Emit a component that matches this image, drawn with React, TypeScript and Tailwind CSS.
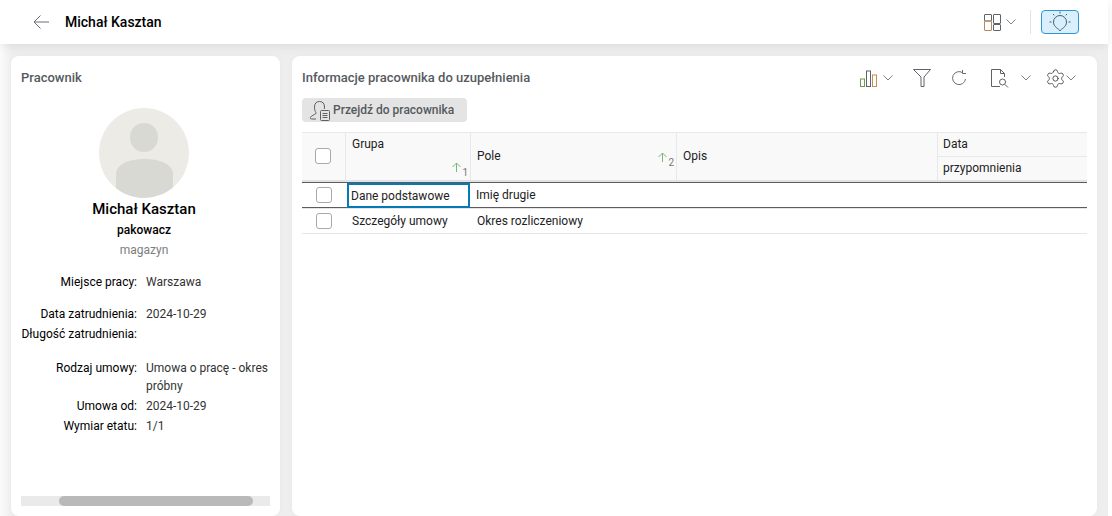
import React from "react";
import { Settings } from "lucide-react";

const Chevron = () => (
  <svg width="10" height="6" viewBox="0 0 10 6" fill="none" stroke="#6f7480" strokeWidth="0.9">
    <path d="M0.5 0.5L5 5l4.500-4.500" />
  </svg>
);

const SortArrow = ({ n }: { n: number }) => (
  <span className="flex items-start">
    <svg width="9" height="10" viewBox="0 0 9 10" fill="none" stroke="#78b878" strokeWidth="1">
      <path d="M4.500 10V1M0.500 5l4-4 4 4" />
    </svg>
    <span className="text-[10px] leading-[10px] mt-[6px] ml-[1px] text-[#777]">{n}</span>
  </span>
);

const Check = () => <div className="h-4 w-4 rounded-[3px] border border-[#a9a9a9] bg-white" />;

const Info = ({ label, value, className }: { label: string; value?: string; className?: string }) => (
  <div className={`flex ${className || ""}`}>
    <div className="w-[116px] shrink-0 whitespace-nowrap text-right font-[450] text-black">{label}</div>
    <div className="ml-[9px] w-[124px] text-[#333]">{value}</div>
  </div>
);

export default function App() {
  return (
    <div className="h-[516px] w-[1112px] overflow-hidden bg-white text-[12px] leading-[18px]" style={{ fontFamily: "Roboto, sans-serif" }}>
      <div className="h-full w-[1108px] bg-[linear-gradient(to_right,#fbfbfb,#eeeeee_12px)] flex flex-col">
        {/* Header */}
        <header className="h-[44px] shrink-0 bg-white shadow-[0_2px_10px_rgba(0,0,0,0.08)] flex items-center pl-[33px] pr-[29px] z-10">
          <svg width="16" height="14" viewBox="0 0 16 14" fill="none" stroke="#6b6f76" strokeWidth="1">
            <path d="M16 7H1M7.500 0.500L1 7l6.500 6.500" />
          </svg>
          <h1 className="ml-[16px] text-[14px] font-medium text-black">Michał Kasztan</h1>
          <div className="ml-auto flex items-center">
            <svg width="17" height="17" viewBox="0 0 17 17" fill="none" stroke="#5f6368" strokeWidth="1">
              <rect x="0.500" y="0.500" width="7" height="6.500" rx="0.500" />
              <rect x="0.500" y="7" width="7" height="9.500" rx="0.500" stroke="#b9875c" />
              <rect x="9.500" y="0.500" width="7" height="9" rx="0.500" />
              <rect x="9.500" y="10.500" width="7" height="6" rx="0.500" />
            </svg>
            <span className="ml-[5px]"><Chevron /></span>
            <div className="ml-[14px] h-[24px] w-px bg-[#e3e3e3]" />
            <button className="ml-[10px] flex h-[24px] w-[38px] items-center justify-center rounded-[4px] border border-[#2b95d6] bg-[#d9f0fc]">
              <svg width="24" height="22" viewBox="0 0 24 22" fill="none" stroke="#3f5f75" strokeWidth="1">
                <path d="M12 20c-1-2.500-6.500-3.500-6.500-9a6.500 6.500 0 0 1 13 0c0 5.500-5.500 6.500-6.500 9z" />
                <path d="M12 0.500v2M5 3l1.300 1.300M19 3l-1.300 1.300M1.500 11h2M20.500 11h2" />
              </svg>
            </button>
          </div>
        </header>

        <main className="flex-1 flex gap-3 pl-[11px] pr-[11px] pt-3 min-h-0">
          {/* Left panel */}
          <section className="w-[269px] shrink-0 rounded-[8px] bg-white flex flex-col px-[10px] pt-[13px] pb-[10px] shadow-[0_0_6px_rgba(0,0,0,0.03)]">
            <h2 className="font-medium text-[#555a60] text-[13px] leading-[17px]">Pracownik</h2>
            <div className="mt-[22px] flex justify-center pr-[3px]">
              <div className="relative h-[90px] w-[90px] overflow-hidden rounded-full bg-[#ecebe6]">
                <div className="absolute left-[31px] top-[15px] h-[29px] w-[28px] rounded-full bg-[#d9d9d4]" />
                <div className="absolute left-[17px] top-[51px] h-[50px] w-[57px] rounded-[28px/14px] bg-[#d9d9d4]" />
              </div>
            </div>
            <div className="mt-[1px] pr-[3px] text-center">
              <div className="text-[15px] leading-[20px] font-medium text-black">Michał Kasztan</div>
              <div className="mt-[2px] font-medium text-black leading-[18px]">pakowacz</div>
              <div className="mt-[1px] text-[#7d7d7d] leading-[20px]">magazyn</div>
            </div>
            <div className="mt-[13px]">
              <Info label="Miejsce pracy:" value="Warszawa" />
              <Info label="Data zatrudnienia:" value="2024-10-29" className="mt-[14px]" />
              <Info label="Długość zatrudnienia:" className="mt-[2px]" />
              <Info label="Rodzaj umowy:" value="Umowa o pracę - okres próbny" className="mt-[16px]" />
              <Info label="Umowa od:" value="2024-10-29" className="mt-[2px]" />
              <Info label="Wymiar etatu:" value="1/1" className="mt-[2px]" />
            </div>
            <div className="mt-auto h-[10px] bg-[#eaeaea] pl-[38px]">
              <div className="h-[10px] w-[194px] rounded-full bg-[#b9b9b9]" />
            </div>
          </section>

          {/* Right panel */}
          <section className="flex-1 min-w-0 rounded-[8px] bg-white px-[10px] shadow-[0_0_6px_rgba(0,0,0,0.03)]">
            <div className="h-[36px] flex items-center">
              <h2 className="font-medium text-[#555a60] text-[13px] mt-[7px]">Informacje pracownika do uzupełnienia</h2>
              <div className="ml-auto flex items-center mt-[8px] mr-[11px]">
                <svg width="18" height="17" viewBox="0 0 18 17" fill="none" stroke="#5f6368" strokeWidth="1">
                  <rect x="0.500" y="9" width="4" height="7.500" stroke="#6f9a50" />
                  <rect x="6.500" y="1" width="4" height="15.500" />
                  <rect x="12.500" y="5" width="4" height="11.500" stroke="#c98a55" />
                </svg>
                <span className="ml-[5px]"><Chevron /></span>
                <svg className="ml-[20px]" width="18" height="18" viewBox="0 0 18 18" fill="none" stroke="#5f6368" strokeWidth="1">
                  <path d="M0.500 0.500h17L11 8v9.500H8V8z" />
                </svg>
                <svg className="ml-[20px]" width="16" height="16" viewBox="0 0 16 16" fill="none" stroke="#6a6e73" strokeWidth="1">
                  <path d="M14.500 9A6.500 6.500 0 1 1 11.500 2.600" />
                  <path d="M11.500 0v3.500H15" />
                </svg>
                <svg className="ml-[24px]" width="18" height="19" viewBox="0 0 18 19" fill="none" stroke="#5f6368" strokeWidth="1">
                  <path d="M9 17.500H0.500V0.500h9l4 4V8" />
                  <path d="M9.500 0.500v4h4" />
                  <circle cx="11.500" cy="13" r="3" />
                  <path d="M13.800 15.300L17 18.500" />
                </svg>
                <span className="ml-[12px]"><Chevron /></span>
                <Settings className="ml-[14px] -mr-[1px]" size={21} strokeWidth={1} color="#3f4348" />
                <span className="ml-[1px]"><Chevron /></span>
              </div>
            </div>

            <button className="mt-[6px] flex h-[24px] w-[165px] items-center rounded-[4px] bg-[#e4e4e4] pl-[8px] font-medium text-[#555a60]">
              <svg width="23" height="22" viewBox="0 0 23 22" fill="none" stroke="#5f5f5f" strokeWidth="1" className="-ml-[1px] shrink-0">
                <path d="M7 20H2.500c-1 0-1.500-.8-1-1.700C2.500 16.500 5 16 7 14.500v-1C6 12.500 5.500 10.500 5.500 8c0-3.500 1.800-5.500 5-5.500s5 2 5 5.500c0 .8-.1 1.500-.2 2" />
                <rect x="11.500" y="11.500" width="9" height="10" rx="1" />
                <path d="M13.500 14.500h5M13.500 16.500h5M13.500 18.500h5" />
              </svg>
              <span className="ml-[1px]">Przejdź do pracownika</span>
            </button>

            {/* Table */}
            <div className="mt-[10px] text-[12px] text-[#222]">
              <div className="flex h-[50px] border-t border-[#e8e8e8] border-b-2 border-b-[#e3e3e3] bg-[#f9f9f9] font-[450] text-[#222]">
                <div className="flex w-[44px] shrink-0 items-center justify-center border-r border-[#e8e8e8] pr-[1px] pb-[2px]">
                  <Check />
                </div>
                <div className="relative w-[125px] shrink-0 border-r border-[#e8e8e8] pl-[6px] pt-[2px]">
                  Grupa
                  <span className="absolute right-[2px] bottom-[2px]"><SortArrow n={1} /></span>
                </div>
                <div className="relative flex w-[206px] shrink-0 items-center border-r border-[#e8e8e8] pl-[6px] pb-[2px]">
                  Pole
                  <span className="absolute right-[2px] top-[19px]"><SortArrow n={2} /></span>
                </div>
                <div className="flex w-[261px] shrink-0 items-center border-r border-[#e8e8e8] pl-[6px] pb-[2px]">Opis</div>
                <div className="flex-1">
                  <div className="flex h-[24px] items-center border-b border-[#e8e8e8] pl-[5px] pb-[2px]">Data</div>
                  <div className="flex h-[23px] items-center pl-[5px] pb-[2px]">przypomnienia</div>
                </div>
              </div>
              <div className="flex h-[26px] border-y border-[#5c5c5c] bg-white">
                <div className="flex w-[44px] shrink-0 items-center justify-center"><Check /></div>
                <div className="ml-[1px] -mb-[1px] flex w-[123px] shrink-0 items-center border-2 border-[#0679b8] pl-[2px]">Dane podstawowe</div>
                <div className="flex items-center pl-[6px]">Imię drugie</div>
              </div>
              <div className="flex h-[26px] border-y border-[#e6e6e6] bg-white">
                <div className="flex w-[44px] shrink-0 items-center justify-center"><Check /></div>
                <div className="flex w-[125px] shrink-0 items-center pl-[6px]">Szczegóły umowy</div>
                <div className="flex items-center pl-[6px]">Okres rozliczeniowy</div>
              </div>
            </div>
          </section>
        </main>
      </div>
    </div>
  );
}
